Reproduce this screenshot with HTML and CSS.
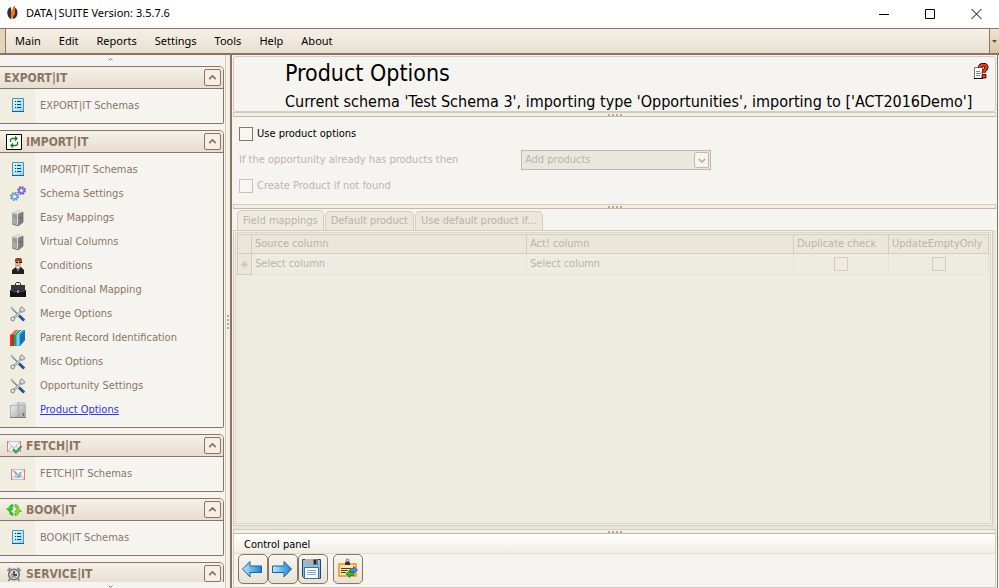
FILE: index.html
```html
<!DOCTYPE html>
<html lang="en">

<head>
    <meta charset="UTF-8">
    <meta name="viewport" content="width=device-width, initial-scale=1.0">
    <title>DATA|SUITE Version: 3.5.7.6</title>
    <link rel="stylesheet" href="styles.css">
</head>

<body>
    <!-- shared icons -->
    <svg class="sprite" aria-hidden="true">
        <defs>
            <linearGradient id="gBlue" x1="0" y1="0" x2="1" y2="1">
                <stop offset="0" stop-color="#e4f8ff" />
                <stop offset="1" stop-color="#90d4fa" />
            </linearGradient>
            <linearGradient id="gArrow" x1="0" y1="0" x2="1" y2="0">
                <stop offset="0" stop-color="#b4ecfc" />
                <stop offset="1" stop-color="#1484d4" />
            </linearGradient>
            <linearGradient id="gBox" x1="0" y1="0" x2="1" y2="1">
                <stop offset="0" stop-color="#f4f4f4" />
                <stop offset="1" stop-color="#a4a4a4" />
            </linearGradient>
        </defs>
        <symbol id="i-list" viewBox="0 0 16 16">
            <path d="M2.500 .5h11v13h-11z" fill="url(#gBlue)" stroke="#3c98d8" />
            <path d="M2 13.500h12" stroke="#1c5c94" />
            <path d="M5 3.500h1M5 6.500h1M5 9.500h1M7 3.500h4M7 6.500h4M7 9.500h4" stroke="#203858" />
        </symbol>
        <symbol id="i-gears" viewBox="0 0 16 16">
            <circle cx="4.500" cy="10.500" r="2.600" fill="none" stroke="#78b0e0" stroke-width="2" />
            <circle cx="4.500" cy="10.500" r="3.900" fill="none" stroke="#4878b8" stroke-width="1.200" stroke-dasharray="1.600 1.460" />
            <circle cx="11.500" cy="4.500" r="2.500" fill="none" stroke="#8878dc" stroke-width="2" />
            <circle cx="11.500" cy="4.500" r="3.800" fill="none" stroke="#5840b0" stroke-width="1.200" stroke-dasharray="1.600 1.380" />
        </symbol>
        <symbol id="i-server" viewBox="0 0 16 16">
            <path d="M2 3l6-3 5 2v10l-5 4-6-2z" fill="#a8a8a8" />
            <path d="M2 3l6-3 5 2-5 2z" fill="#dcdcdc" />
            <path d="M8 4l5-2v10l-5 4z" fill="#808080" />
            <path d="M7.500 4v11" stroke="#d8d8d8" />
            <path d="M3 5.500l4 1M3 7.500l4 1" stroke="#8c8c8c" fill="none" />
            <path d="M10 7h1v2h-1z" fill="#e82020" />
            <path d="M2 14l6 2 5-4V2" fill="none" stroke="#505050" stroke-width=".6" />
        </symbol>
        <symbol id="i-agent" viewBox="0 0 16 16">
            <path d="M5 3h6v5l-2 2H7L5 8z" fill="#e0ac78" />
            <path d="M5 4V1l2-1h4l1 2v2h-1L9 3z" fill="#8a4a18" />
            <path d="M6 4h2v1H6zM9 4h3v1H9z" fill="#111" />
            <path d="M2 16v-4l4-3h5l3 3v4z" fill="#202024" />
            <path d="M6 9h4l-2 5z" fill="#fff" />
            <path d="M8 10v4" stroke="#222" />
        </symbol>
        <symbol id="i-case" viewBox="0 0 16 16">
            <path d="M5.500 3V1.500l1-1h3l1 1V3" fill="none" stroke="#222" />
            <path d="M1 3h14v6H1z" fill="#36363a" />
            <path d="M0 8h16v7H0z" fill="#141418" />
            <path d="M1 8.500l5 1h4l5-1" stroke="#606060" fill="none" />
            <path d="M7 8h2v3H7z" fill="#909090" />
        </symbol>
        <symbol id="i-tools" viewBox="0 0 16 16">
            <path d="M1 1.500L8.500 9" stroke="#84888e" stroke-width="1.500" />
            <path d="M1 1.500l2 .5" stroke="#b8bcc0" stroke-width="2" />
            <path d="M3.500 12.500l8-8" stroke="#989ca2" stroke-width="2.400" />
            <path d="M4 12l7.500-7.500" stroke="#dcdee0" />
            <circle cx="2.800" cy="13" r="1.800" fill="#f0ede1" stroke="#989ca2" stroke-width="1.300" />
            <path d="M12.500 1.200c-2 0-3 1.300-2.500 3.300s3.500 2.500 5-.5M12.500 1.200l.5 1.800 2 .8" fill="none" stroke="#989ca2" stroke-width="1.200" />
            <path d="M9 9.500l5.200 5" stroke="#204884" stroke-width="3" />
            <path d="M9.500 9l4.500 4.500" stroke="#5888c4" stroke-width=".8" />
        </symbol>
        <symbol id="i-books" viewBox="0 0 16 16">
            <path d="M0 5l5-5h3v10l-5 6H0z" fill="#f02820" />
            <path d="M3 5l5-5h3v10l-5 6H3z" fill="#20a058" />
            <path d="M6 5l5-5h4v10l-5 6H6z" fill="#48b4e4" />
            <path d="M10 5l5-5v10l-5 6z" fill="#2070b0" />
            <path d="M1 4.500L5.500 0M4 4.500L8.500 0M7.500 4.500L12 0" stroke="#f0f8f0" />
            <path d="M8 5v10" stroke="#b4e8fc" />
            <path d="M3 5v11" stroke="#b01010" stroke-width=".8" />
        </symbol>
        <symbol id="i-box" viewBox="0 0 16 16">
            <path d="M1 0h14l1 3v13H0V3z" fill="url(#gBox)" />
            <path d="M7 0h3v16H7z" fill="#a8a8a8" opacity=".5" />
            <path d="M.5 16V3M15.500 16V3M0 3.500h16" stroke="#b4b4b4" fill="none" />
            <path d="M0 15.500h16" stroke="#787878" />
            <path d="M13.500 14v-3M12.500 12h2" stroke="#686868" fill="none" />
        </symbol>
        <symbol id="i-fetch" viewBox="0 0 16 16">
            <path d="M1.500 3.500h13v10h-13z" fill="#f4f4f4" stroke="#c8c0c0" />
            <path d="M1.500 3v11M14.500 3v11" stroke="#e87880" />
            <path d="M2 4l6 6 6-6M2 13l4-5M14 13l-4-5" stroke="#bcbcc4" fill="none" />
        </symbol>
        <symbol id="i-up" viewBox="0 0 10 6">
            <path d="M1 5l4-4 4 4" fill="none" stroke="#8c7464" stroke-width="2" />
        </symbol>
    </svg>

    <header class="titlebar">
        <svg class="logo" viewBox="0 0 14 16">
            <path d="M5 2C0 3 0 12 5 14zM7 14V2c6 0 6 11 0 12z" fill="#303030" />
            <path d="M9 0v9L5 15V6z" fill="#f07820" />
        </svg>
        <span class="app-name">DATA|SUITE Version: 3.5.7.6</span>
        <div class="window-buttons">
            <button aria-label="Minimize"><svg viewBox="0 0 11 11"><path d="M0 6.500h10" /></svg></button>
            <button aria-label="Maximize"><svg viewBox="0 0 11 11"><path d="M.5 1.500h9v9h-9z" /></svg></button>
            <button aria-label="Close"><svg viewBox="0 0 11 11"><path d="M.5 1l10 10M10.500 1L.5 11" /></svg></button>
        </div>
    </header>

    <nav class="menubar">
        <button>Main</button>
        <button>Edit</button>
        <button>Reports</button>
        <button>Settings</button>
        <button>Tools</button>
        <button>Help</button>
        <button>About</button>
        <button class="menu-more" aria-label="More"><svg viewBox="0 0 5 3"><path d="M0 0h5L2.500 3z" /></svg></button>
    </nav>

    <div class="workspace">
        <aside class="sidebar">
            <div class="scroll-hint"><svg viewBox="0 0 10 6"><use href="#i-up" /></svg></div>
            <div class="groups">
                <section class="group">
                    <h2>EXPORT|IT <button aria-label="Collapse"><svg viewBox="0 0 10 6"><use href="#i-up" /></svg></button></h2>
                    <ul>
                        <li><a href="#"><svg><use href="#i-list" /></svg>EXPORT|IT Schemas</a></li>
                    </ul>
                </section>
                <section class="group">
                    <h2>
                        <svg class="head-icon" viewBox="0 0 16 16">
                            <path d="M.5.5h15v15H.5z" fill="#fff" stroke="#000" />
                            <path d="M4.500 8V5.500L6 4.500h5M9 2.500l2 2-2 2M11.500 8v2.500l-1.500 1H5M7 9.500l-2 2 2 2" fill="none" stroke="#108010" stroke-width="1.300" />
                        </svg>
                        IMPORT|IT <button aria-label="Collapse"><svg viewBox="0 0 10 6"><use href="#i-up" /></svg></button>
                    </h2>
                    <ul>
                        <li><a href="#"><svg><use href="#i-list" /></svg>IMPORT|IT Schemas</a></li>
                        <li><a href="#"><svg><use href="#i-gears" /></svg>Schema Settings</a></li>
                        <li><a href="#"><svg><use href="#i-server" /></svg>Easy Mappings</a></li>
                        <li><a href="#"><svg><use href="#i-server" /></svg>Virtual Columns</a></li>
                        <li><a href="#"><svg><use href="#i-agent" /></svg>Conditions</a></li>
                        <li><a href="#"><svg><use href="#i-case" /></svg>Conditional Mapping</a></li>
                        <li><a href="#"><svg><use href="#i-tools" /></svg>Merge Options</a></li>
                        <li><a href="#"><svg><use href="#i-books" /></svg>Parent Record Identification</a></li>
                        <li><a href="#"><svg><use href="#i-tools" /></svg>Misc Options</a></li>
                        <li><a href="#"><svg><use href="#i-tools" /></svg>Opportunity Settings</a></li>
                        <li><a href="#" class="current"><svg><use href="#i-box" /></svg>Product Options</a></li>
                    </ul>
                </section>
                <section class="group">
                    <h2>
                        <svg class="head-icon" viewBox="0 0 16 16">
                            <use href="#i-fetch" />
                            <path d="M7 11l3 3.500L15.500 8" fill="none" stroke="#30a050" stroke-width="2" />
                        </svg>
                        FETCH|IT <button aria-label="Collapse"><svg viewBox="0 0 10 6"><use href="#i-up" /></svg></button>
                    </h2>
                    <ul>
                        <li>
                            <a href="#">
                                <svg viewBox="0 0 16 16">
                                    <use href="#i-fetch" />
                                    <path d="M4 5l5 5M10 6v5H5" fill="none" stroke="#88acc0" stroke-width="1.500" />
                                </svg>FETCH|IT Schemas
                            </a>
                        </li>
                    </ul>
                </section>
                <section class="group">
                    <h2>
                        <svg class="head-icon" viewBox="0 0 16 16">
                            <path d="M7 2.500C4.500 2.500 3 4 3 6.500H.5L4 10.500l3-4H5.500C5.500 5.500 6 5 7 5zM3.500 11C4 12.500 5 13.500 7 13.500V11c-.8 0-1-.3-1.300-1z" fill="#28d818" stroke="#109808" stroke-width=".5" />
                            <path d="M9 13.500c2.500 0 4-1.500 4-4h2.500L12 5.500l-3 4h1.500c0 1-.5 1.500-1.500 1.500zM12.500 5C12 3.500 11 2.500 9 2.500V5c.8 0 1 .3 1.300 1z" fill="#98dc18" stroke="#109808" stroke-width=".5" />
                        </svg>
                        BOOK|IT <button aria-label="Collapse"><svg viewBox="0 0 10 6"><use href="#i-up" /></svg></button>
                    </h2>
                    <ul>
                        <li><a href="#"><svg><use href="#i-list" /></svg>BOOK|IT Schemas</a></li>
                    </ul>
                </section>
                <section class="group">
                    <h2>
                        <svg class="head-icon" viewBox="0 0 16 16">
                            <path d="M1.500 5l3-3M14.500 5l-3-3M4 13l-1.500 2M12 13l1.500 2" stroke="#888" stroke-width="2" />
                            <circle cx="8" cy="8.500" r="5.300" fill="#d8d8d8" stroke="#707070" stroke-width="1.500" />
                            <path d="M8 5v4h3" fill="none" stroke="#222" stroke-width="1.300" />
                            <path d="M6 7v4h4" fill="none" stroke="#777" />
                        </svg>
                        SERVICE|IT <button aria-label="Collapse"><svg viewBox="0 0 10 6"><use href="#i-up" /></svg></button>
                    </h2>
                </section>
            </div>
            <div class="scroll-hint down"><svg viewBox="0 0 10 6"><use href="#i-up" /></svg></div>
        </aside>

        <div class="splitter vertical"><i></i><i></i><i></i><i></i></div>

        <main class="content">
            <section class="page-head">
                <div>
                    <h1>Product Options</h1>
                    <p>Current schema 'Test Schema 3', importing type 'Opportunities', importing to ['ACT2016Demo']</p>
                </div>
                <button class="help" aria-label="Help">
                    <svg viewBox="0 0 16 16">
                        <path d="M1.500 4.500h8v11h-8z" fill="#fff" stroke="#777" />
                        <path d="M3 8.500h4M3 10.500h5M3 12.500h4" stroke="#888" />
                        <path d="M1 15.500h9" stroke="#000" />
                        <path d="M7 4.500C7 1 14 1 13.500 4.500 13.300 7 10.500 6.500 10.500 10" fill="none" stroke="#200" stroke-width="4" />
                        <path d="M7 4.500C7 1 14 1 13.500 4.500 13.300 7 10.500 6.500 10.500 10" fill="none" stroke="#f83810" stroke-width="2.500" />
                        <path d="M9 11.500h4v3.500H9z" fill="#f83810" stroke="#200" stroke-width=".8" />
                    </svg>
                </button>
            </section>

            <div class="splitter"><i></i><i></i><i></i><i></i></div>

            <form class="options">
                <label class="check"><input type="checkbox"> Use product options</label>
                <div class="row">
                    <label for="existing">If the opportunity already has products then</label>
                    <div class="combo">
                        <select id="existing" disabled>
                            <option>Add products</option>
                        </select>
                        <span class="combo-arrow"><svg viewBox="0 0 10 6"><path d="M1 1l4 4 4-4" /></svg></span>
                    </div>
                </div>
                <label class="check disabled"><input type="checkbox" disabled> Create Product if not found</label>
            </form>

            <div class="splitter"><i></i><i></i><i></i><i></i></div>

            <section class="mappings">
                <div class="tabs" role="tablist">
                    <button role="tab" class="active" aria-selected="true" disabled>Field mappings</button>
                    <button role="tab" disabled>Default product</button>
                    <button role="tab" disabled>Use default product if...</button>
                </div>
                <div class="tab-page">
                    <div class="grid">
                        <table>
                            <colgroup>
                                <col class="col-mark">
                                <col class="col-source">
                                <col>
                                <col class="col-dup">
                                <col class="col-empty">
                            </colgroup>
                            <thead>
                                <tr>
                                    <th></th>
                                    <th>Source column</th>
                                    <th>Act! column</th>
                                    <th>Duplicate check</th>
                                    <th>UpdateEmptyOnly</th>
                                </tr>
                            </thead>
                            <tbody>
                                <tr>
                                    <td class="mark"><svg viewBox="0 0 7 7"><path d="M3.500 0v7M0 3.500h7M1 1l5 5M6 1L1 6" /></svg></td>
                                    <td>Select column</td>
                                    <td>Select column</td>
                                    <td class="tick"><input type="checkbox" aria-label="Duplicate check" disabled></td>
                                    <td class="tick"><input type="checkbox" aria-label="UpdateEmptyOnly" disabled></td>
                                </tr>
                            </tbody>
                        </table>
                    </div>
                </div>
            </section>

            <div class="splitter"><i></i><i></i><i></i><i></i></div>

            <section class="control-panel">
                <h2>Control panel</h2>
                <div class="buttons">
                    <button aria-label="Back">
                        <svg viewBox="0 0 22 22"><path d="M.5 11L8 3.500V8h11.500v6.500H8V19z" fill="url(#gArrow)" stroke="#2858a8" /></svg>
                    </button>
                    <button aria-label="Next">
                        <svg viewBox="0 0 22 22"><path d="M19.500 11L12 3.500V8H.5v6.500H12V19z" fill="url(#gArrow)" stroke="#2858a8" /></svg>
                    </button>
                    <button aria-label="Save">
                        <svg viewBox="0 0 22 22">
                            <path d="M.5 1.500h18v19h-16l-2-2z" fill="#88c0e4" stroke="#184878" />
                            <path d="M3 1h13v6H3z" fill="#787878" />
                            <path d="M3 1h8v6H3z" fill="#b0b0b0" />
                            <path d="M12 2h2v4h-2z" fill="#222" />
                            <path d="M2.500 9.500h14v11h-14z" fill="#fff" stroke="#3870a8" />
                            <path d="M5 12.500h9M5 14.500h9M5 16.500h9" stroke="#88a8d8" />
                        </svg>
                    </button>
                    <button class="run" aria-label="Run import">
                        <svg viewBox="0 0 22 22">
                            <path d="M2 6h17v12H2z" fill="#ffe890" stroke="#f09030" stroke-width="1.500" />
                            <path d="M4 10.500h9M4 12.500h7M4 14.500h5" stroke="#404040" />
                            <path d="M8 7V4.500L10.500 3 13 4.500V7z" fill="#333" />
                            <circle cx="10.500" cy="2.500" r="1.500" fill="none" stroke="#666" />
                            <path d="M13 10.500h3.500V8.500L20.500 12l-4 3.500v-2H13z" fill="#3c90f0" stroke="#1848a0" stroke-width=".7" />
                            <path d="M17 14.500h-4v-2L9 16l4 3.500v-2h4z" fill="#38b838" stroke="#107010" stroke-width=".7" />
                        </svg>
                    </button>
                </div>
            </section>
        </main>
    </div>
</body>

</html>
```

FILE: styles.css
```css
:root {
    --brown: #8c7464;
    --line: #c4b8a8;
    --soft: #d4ccbc;
    --bg: #f6f4f0;
    --grid: #eeebe2;
    --faded: #b8b4a8;
}

* {
    box-sizing: border-box;
}

body {
    display: flex;
    flex-direction: column;
    height: 100vh;
    margin: 0;
    overflow: hidden;
    font-family: "DejaVu Sans Condensed", "DejaVu Sans", sans-serif;
    font-size: 11px;
    line-height: 14px;
    color: #000;
    background-color: var(--bg);
}

h1,
h2,
p,
ul {
    margin: 0;
    padding: 0;
}

button,
select,
input {
    margin: 0;
    font: inherit;
    color: inherit;
}

button {
    padding: 0;
    border: none;
    background: transparent;
}

svg {
    display: block;
    flex: none;
}

.sprite {
    position: absolute;
    width: 0;
    height: 0;
}

/* title bar */
.titlebar {
    display: flex;
    flex: none;
    align-items: center;
    height: 28px;
    padding-left: 6px;
    padding-bottom: 2px;
    background-color: #fff;
    font-family: "Noto Sans", sans-serif;
}

.logo {
    width: 14px;
    height: 16px;
    margin-right: 6px;
}

.window-buttons {
    display: flex;
    margin-left: auto;
}

.window-buttons button {
    width: 46px;
    height: 26px;
}

.window-buttons svg {
    width: 11px;
    height: 11px;
    margin: 0 auto;
    fill: none;
    stroke: #000;
}

/* menu */
.menubar {
    display: flex;
    flex: none;
    height: 26px;
    padding-left: 6px;
    border-top: 1px solid var(--brown);
    border-bottom: 1px solid var(--brown);
    background: linear-gradient(#f4f0e8, #e8e0d0);
    box-shadow: inset 5px 0 #e4d4b8, inset 6px 0 var(--brown);
    font-family: "Noto Sans", sans-serif;
}

.menubar button {
    padding: 0 9px;
}

.menubar .menu-more {
    width: 10px;
    margin-left: auto;
    padding: 0 2px;
    border-left: 1px solid var(--brown);
    background: linear-gradient(#efe6d6, #d8c4a4);
}

.menu-more svg {
    width: 5px;
    height: 3px;
    fill: #685040;
}

.workspace {
    display: flex;
    flex: 1;
    min-height: 0;
    border-top: 1px solid var(--brown);
}

/* sidebar */
.sidebar {
    display: flex;
    flex: none;
    flex-direction: column;
    width: 225px;
    color: var(--brown);
}

.scroll-hint {
    flex: none;
    height: 11px;
    padding: 3px 4px 0 0;
}

.scroll-hint svg {
    width: 5px;
    height: 3px;
    margin: 0 auto;
}

.scroll-hint.down {
    height: 6px;
}

.scroll-hint.down svg {
    transform: rotate(180deg);
}

.groups {
    display: flex;
    flex: 1;
    flex-direction: column;
    gap: 6px;
    min-height: 0;
    padding-right: 1px;
    overflow: hidden;
}

.group {
    flex: none;
    border: 1px solid var(--brown);
    border-left: none;
    border-radius: 0 5px 2px 0;
}

.group h2 {
    display: flex;
    align-items: center;
    gap: 4px;
    height: 22px;
    padding: 0 2px 0 4px;
    border-bottom: 1px solid var(--brown);
    border-radius: 0 4px 0 0;
    background: linear-gradient(#f6f2ea, #e6dece);
    font-size: 12px;
    font-weight: bold;
}

.head-icon {
    width: 16px;
    height: 16px;
    margin-left: 2px;
}

.group h2 button {
    width: 17px;
    height: 17px;
    margin-left: auto;
    border: 1px solid var(--brown);
    border-radius: 2px;
    background-color: #f4f0e8;
}

.group h2 button svg {
    width: 9px;
    height: 5px;
    margin: 0 auto;
}

.group ul {
    padding: 5px 0;
    list-style: none;
    background: linear-gradient(to right, #f0ede1 35px, var(--bg) 35px);
}

.group a {
    display: flex;
    align-items: center;
    gap: 14px;
    height: 24px;
    padding-left: 10px;
    color: var(--brown);
    line-height: 16px;
    text-decoration: none;
}

.group a svg {
    width: 16px;
    height: 16px;
}

.group a.current {
    color: #3434f0;
    text-decoration: underline;
}

/* splitters */
.splitter {
    display: flex;
    flex: none;
    align-items: center;
    justify-content: center;
    gap: 2px;
    height: 5px;
    border: 1px solid var(--soft);
    border-bottom-color: var(--line);
    background-color: #f4efe4;
}

.splitter i {
    width: 2px;
    height: 2px;
    background-color: #b8a890;
}

.splitter.vertical {
    flex-direction: column;
    width: 7px;
    height: auto;
    border-width: 0 2px 0 1px;
    border-color: var(--soft);
    border-right-color: var(--brown);
}

/* content */
.content {
    display: flex;
    flex: 1;
    flex-direction: column;
    min-width: 0;
    margin-right: 1px;
    padding: 1px 1px 0;
    border-right: 1px solid var(--brown);
}

.page-head {
    display: flex;
    justify-content: space-between;
    height: 56px;
    padding: 2px 6px 0 51px;
    border: 1px solid var(--soft);
    border-radius: 3px;
}

.page-head h1 {
    font-size: 23px;
    font-weight: normal;
    line-height: 28px;
}

.page-head p {
    font-size: 16px;
    line-height: 30px;
    white-space: nowrap;
}

.help {
    width: 16px;
    height: 16px;
    margin-top: 4px;
}

.options {
    display: flex;
    flex-direction: column;
    height: 87px;
    padding: 10px 6px;
}

.check {
    display: flex;
    align-items: center;
    gap: 4px;
    height: 14px;
}

.row {
    display: flex;
    align-items: center;
    height: 20px;
    margin: 9px 0;
    color: #bcb4b0;
}

.row label {
    width: 282px;
}

.disabled {
    color: #bcb4b0;
}

input[type="checkbox"] {
    width: 14px;
    height: 14px;
    border: 1px solid var(--brown);
    background-color: #f8f6f2;
    appearance: none;
}

input[type="checkbox"]:disabled {
    border-color: #c8c0b8;
}

.combo {
    position: relative;
    width: 190px;
}

.combo select {
    display: block;
    width: 100%;
    height: 20px;
    padding: 0 3px;
    border: 1px solid var(--line);
    border-radius: 0;
    background-color: #ebe7dc;
    opacity: 1;
    appearance: none;
}

.combo-arrow {
    position: absolute;
    top: 2px;
    right: 2px;
    display: flex;
    align-items: center;
    justify-content: center;
    width: 15px;
    height: 16px;
    border: 1px solid var(--line);
    border-radius: 2px;
    background-color: var(--bg);
    pointer-events: none;
}

.combo-arrow svg {
    width: 8px;
    height: 5px;
    fill: none;
    stroke: #bcb0a4;
    stroke-width: 2;
}

/* mappings */
.mappings {
    display: flex;
    flex: 1;
    flex-direction: column;
    min-height: 0;
    color: var(--faded);
}

.tabs {
    display: flex;
    flex: none;
    align-items: flex-end;
    gap: 1px;
    height: 21px;
    padding-left: 4px;
}

.tabs button {
    height: 19px;
    padding: 0 5px;
    border: 1px solid var(--soft);
    border-bottom: none;
    border-radius: 5px 5px 0 0;
    background-color: #ebe7dc;
}

.tabs button.active {
    height: 20px;
    background-color: var(--grid);
}

.tab-page {
    flex: 1;
    min-height: 0;
    padding-right: 3px;
    padding-bottom: 3px;
    background-color: #e8e4da;
}

.grid {
    height: 100%;
    padding: 3px;
    border: 1px solid var(--soft);
    background-color: var(--grid);
    box-shadow: inset 0 0 0 1px #f2efe8, inset 0 0 0 2px #dcd6ca;
}

table {
    width: 100%;
    border-collapse: collapse;
    table-layout: fixed;
}

.col-mark {
    width: 14px;
}

.col-source {
    width: 275px;
}

.col-dup {
    width: 95px;
}

.col-empty {
    width: 100px;
}

th,
td {
    padding: 0 3px;
    font-weight: normal;
    text-align: left;
    white-space: nowrap;
}

th {
    height: 19px;
    border: 1px solid var(--soft);
    background-color: #eae6da;
}

td {
    height: 21px;
    border: 1px solid #e6e2d8;
}

td.mark {
    border-color: var(--soft);
    background-color: #eae6da;
}

.mark svg {
    width: 7px;
    height: 7px;
    stroke: #d0c4b4;
}

td.tick {
    text-align: center;
}

.tick input {
    display: block;
    margin: 0 auto;
    background-color: transparent;
}

td.tick input:disabled {
    border-color: var(--soft);
}

/* control panel */
.control-panel {
    flex: none;
    height: 54px;
    border: 1px solid var(--soft);
    border-top: none;
}

.control-panel h2 {
    height: 20px;
    padding: 4px 10px 0;
    border-bottom: 1px solid #e4dccc;
    background: linear-gradient(#fff, #f0ede4);
    font-size: 11px;
    font-weight: normal;
}

.buttons {
    display: flex;
    padding-left: 4px;
}

.buttons button {
    width: 30px;
    height: 30px;
    border: 1px solid var(--brown);
    border-radius: 5px;
    background: linear-gradient(#f8f6f0, #e8e2d4);
}

.buttons .run {
    margin-left: 5px;
}

.buttons svg {
    width: 22px;
    height: 22px;
    margin: 0 auto;
}
```
